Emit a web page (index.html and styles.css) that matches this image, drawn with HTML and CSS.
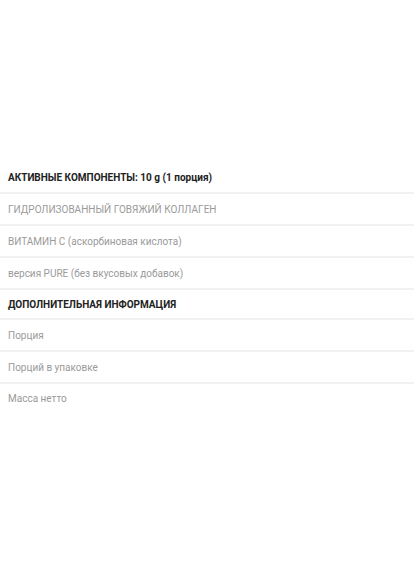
FILE: index.html
```html
<!DOCTYPE html>
<html lang="ru">
<head>
    <meta charset="UTF-8">
    <meta name="viewport" content="width=device-width, initial-scale=1.0">
    <title>Состав</title>
    <link rel="stylesheet" href="styles.css">
</head>
<body>

    <!-- Composition table -->
    <section class="specs">
        <div class="spec-row spec-head">АКТИВНЫЕ КОМПОНЕНТЫ: 10 g (1 порция)</div>
        <div class="spec-row">ГИДРОЛИЗОВАННЫЙ ГОВЯЖИЙ КОЛЛАГЕН</div>
        <div class="spec-row">ВИТАМИН C (аскорбиновая кислота)</div>
        <div class="spec-row">версия PURE (без вкусовых добавок)</div>
        <div class="spec-row spec-head short">ДОПОЛНИТЕЛЬНАЯ ИНФОРМАЦИЯ</div>
        <div class="spec-row">Порция</div>
        <div class="spec-row">Порций в упаковке</div>
        <div class="spec-row last">Масса нетто</div>
    </section>

</body>
</html>
```

FILE: styles.css
```css
/* General */
* {
    margin: 0;
    padding: 0;
    box-sizing: border-box;
}
body {
    background: #fff;
    font-family: Roboto, "Noto Sans", sans-serif;
    color: #999;
}

/* Specs table */
.specs {
    padding-top: 162px;
}
.spec-row {
    height: 32px;
    padding: 0 8px;
    display: flex;
    align-items: center;
    font-size: 10px;
    color: #9a9a9a;
    border-bottom: 2px solid #f1f1f1;
}
.spec-head {
    font-weight: 700;
    color: #222;
}
.spec-head.short {
    height: 30px;
}
.spec-row.last {
    border-bottom: none;
    padding-bottom: 4px;
}
```
